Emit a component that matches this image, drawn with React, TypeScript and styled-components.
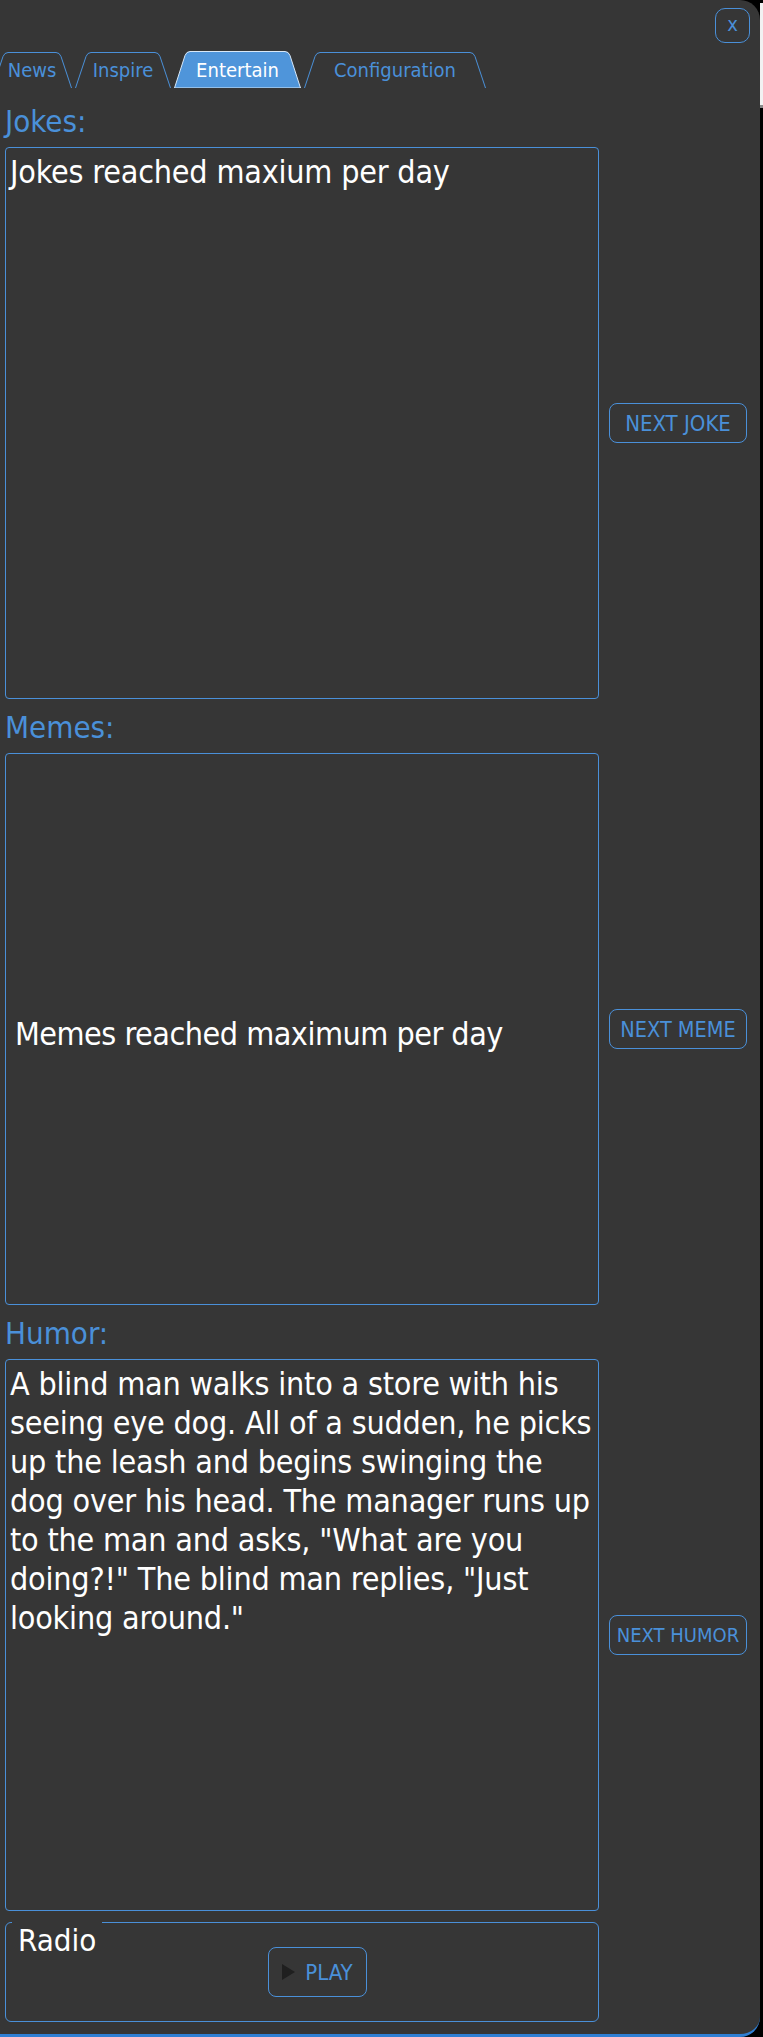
import React from "react";
import styled, { createGlobalStyle } from "styled-components";

const BLUE = "#4a90d9";
const BG = "#363636";
const FONT = `"DejaVu Sans Condensed", "DejaVu Sans", Verdana, sans-serif`;

const Global = createGlobalStyle`
  html, body { margin: 0; padding: 0; }
  body {
    width: 763px;
    min-height: 2037px;
    background:
      linear-gradient(to bottom, #000 0, #000 3px, #f2f2f2 3px, #f2f2f2 105px, #8a8a8a 105px, #8a8a8a 108px, #000 108px) right top / 3px 100% no-repeat,
      #000;
    font-family: ${FONT};
    font-stretch: condensed;
  }
`;

const Panel = styled.div`
  box-sizing: border-box;
  width: 760px;
  height: 2037px;
  background: ${BG};
  border-bottom: 3px solid #2f7fd4;
  border-radius: 0 20px 20px 0;
  padding: 8px 13px 0 5px;
  display: flex;
  flex-direction: column;
  overflow: hidden;
`;

const Header = styled.div`
  display: flex;
  justify-content: flex-end;
  margin-right: -3px;
`;

const CloseButton = styled.button`
  box-sizing: border-box;
  width: 35px;
  height: 35px;
  border: 1px solid ${BLUE};
  border-radius: 10px;
  background: transparent;
  color: ${BLUE};
  font-family: ${FONT};
  font-size: 20px;
  line-height: 1;
  padding: 0 0 3px;
  display: grid;
  place-items: center;
`;

const TabBar = styled.div`
  display: flex;
  align-items: flex-end;
  gap: 3px;
  margin: 8px 0 5px -13px;
  height: 37px;
`;

const TabItem = styled.div<{ $w: number; $active: boolean }>`
  display: grid;
  width: ${(p) => p.$w}px;
  height: ${(p) => (p.$active ? 37 : 36)}px;
  & > * { grid-area: 1 / 1; }
`;

const TabLabel = styled.span<{ $active: boolean }>`
  place-self: center;
  font-size: 20px;
  line-height: 24px;
  color: ${(p) => (p.$active ? "#ffffff" : BLUE)};
  position: relative;
`;

const Tab = ({ label, w, active = false }: { label: string; w: number; active?: boolean }) => {
  const h = active ? 37 : 36;
  const s = 12;
  const d = `M0.5 ${h} L${s - 1} 4.5 Q${s + 0.5} 0.5 ${s + 4} 0.5 L${w - s - 4} 0.5 Q${w - s - 0.5} 0.5 ${w - s + 1} 4.5 L${w - 0.5} ${h}`;
  return (
    <TabItem $w={w} $active={active}>
      <svg width={w} height={h} viewBox={`0 0 ${w} ${h}`}>
        {active ? (
          <path d={d + " Z"} fill="#4f95da" stroke="#d8e8f8" strokeWidth="1" />
        ) : (
          <path d={d} fill="none" stroke={BLUE} strokeWidth="1" />
        )}
      </svg>
      <TabLabel $active={active}>{label}</TabLabel>
    </TabItem>
  );
};

const SectionLabel = styled.div`
  color: ${BLUE};
  font-size: 31px;
  line-height: 36px;
  padding-top: 10px;
`;

const Row = styled.div`
  display: grid;
  grid-template-columns: 594px 138px;
  column-gap: 10px;
  align-items: center;
  margin-top: 8px;
`;

const TextBox = styled.div`
  box-sizing: border-box;
  height: 552px;
  border: 1px solid ${BLUE};
  border-radius: 4px;
  padding: 5px 4px;
  color: #ffffff;
  font-size: 32px;
  line-height: 39px;
  letter-spacing: -0.2px;
  white-space: nowrap;
`;

const MemeBox = styled(TextBox)`
  display: flex;
  align-items: center;
  padding: 10px 9px 0;
  letter-spacing: -0.5px;
`;

const ActionButton = styled.button<{ $size: number }>`
  box-sizing: border-box;
  width: 138px;
  height: 40px;
  border: 1px solid ${BLUE};
  border-radius: 8px;
  background: transparent;
  color: ${BLUE};
  font-family: ${FONT};
  font-stretch: condensed;
  font-size: ${(p) => p.$size}px;
  padding: 0;
  white-space: nowrap;
`;

const RadioBox = styled.div`
  position: relative;
  box-sizing: border-box;
  width: 594px;
  margin-top: 11px;
  height: 100px;
  border: 1px solid ${BLUE};
  border-radius: 6px;
  display: flex;
  align-items: center;
  padding-left: 262px;
`;

const Legend = styled.span`
  position: absolute;
  top: -1px;
  left: 6px;
  padding: 0 6px;
  background: ${BG};
  color: #ffffff;
  font-size: 31px;
  line-height: 36px;
`;

const PlayButton = styled.button`
  box-sizing: border-box;
  width: 99px;
  height: 50px;
  border: 1px solid ${BLUE};
  border-radius: 8px;
  background: transparent;
  display: flex;
  align-items: center;
  justify-content: center;
  gap: 10px;
  padding: 0;
  color: ${BLUE};
  font-family: ${FONT};
  font-stretch: condensed;
  font-size: 22px;
`;

const PlayIcon = styled.span`
  width: 0;
  height: 0;
  border-top: 8px solid transparent;
  border-bottom: 8px solid transparent;
  border-left: 13px solid #1f1f1f;
`;

const humorLines = [
  "A blind man walks into a store with his",
  "seeing eye dog. All of a sudden, he picks",
  "up the leash and begins swinging the",
  "dog over his head. The manager runs up",
  'to the man and asks, "What are you',
  'doing?!" The blind man replies, "Just',
  'looking around."',
];

export default function App() {
  return (
    <>
      <Global />
      <Panel>
        <Header>
          <CloseButton>x</CloseButton>
        </Header>
        <TabBar>
          <Tab label="News" w={80} />
          <Tab label="Inspire" w={96} />
          <Tab label="Entertain" w={127} active />
          <Tab label="Configuration" w={182} />
        </TabBar>

        <SectionLabel>Jokes:</SectionLabel>
        <Row>
          <TextBox>Jokes reached maxium per day</TextBox>
          <ActionButton $size={22}>NEXT JOKE</ActionButton>
        </Row>

        <SectionLabel>Memes:</SectionLabel>
        <Row>
          <MemeBox>Memes reached maximum per day</MemeBox>
          <ActionButton $size={21.5}>NEXT MEME</ActionButton>
        </Row>

        <SectionLabel>Humor:</SectionLabel>
        <Row>
          <TextBox>
            {humorLines.map((line, i) => (
              <React.Fragment key={i}>
                {line}
                {i < humorLines.length - 1 && <br />}
              </React.Fragment>
            ))}
          </TextBox>
          <ActionButton $size={20}>NEXT HUMOR</ActionButton>
        </Row>

        <RadioBox>
          <Legend>Radio</Legend>
          <PlayButton>
            <PlayIcon />
            PLAY
          </PlayButton>
        </RadioBox>
      </Panel>
    </>
  );
}
